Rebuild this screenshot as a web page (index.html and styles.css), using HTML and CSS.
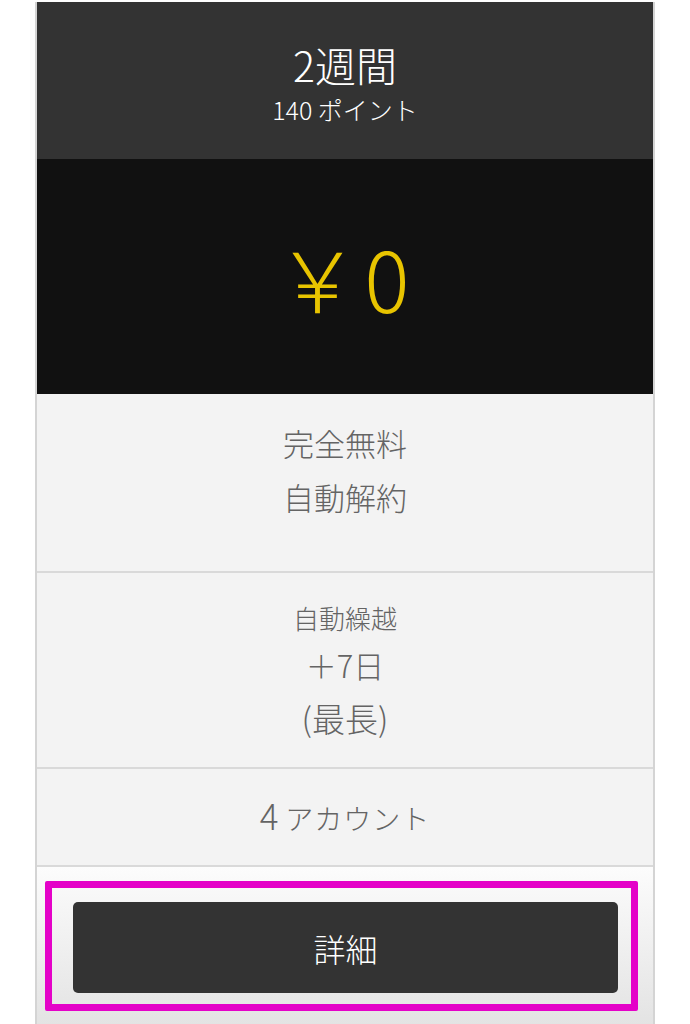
FILE: index.html
```html
<!DOCTYPE html>
<html lang="ja">
<head>
    <meta charset="UTF-8">
    <meta name="viewport" content="width=device-width, initial-scale=1.0">
    <title>2週間プラン</title>
    <link rel="stylesheet" href="styles.css">
</head>
<body>
<div class="plan-card">
    <div class="plan-header">
        <h2 class="plan-title">2週間</h2>
        <p class="plan-points">140 ポイント</p>
    </div>

    <div class="plan-price">￥0</div>

    <div class="plan-row row-free">
        <p>完全無料</p>
        <p>自動解約</p>
    </div>

    <div class="plan-row row-carry">
        <p class="carry-label">自動繰越</p>
        <p class="carry-days">＋7日</p>
        <p class="carry-note">(最長)</p>
    </div>

    <div class="plan-row row-accounts">
        <p><span class="account-num">4</span>アカウント</p>
    </div>

    <div class="plan-footer">
        <div class="highlight-box">
            <button type="button" class="detail-btn">詳細</button>
        </div>
    </div>
</div>
</body>
</html>
```

FILE: styles.css
```css
* {
    margin: 0;
    padding: 0;
    box-sizing: border-box;
}

body {
    background: #ffffff;
    font-family: 'Noto Sans CJK JP', 'Noto Sans', sans-serif;
    font-weight: 300;
    padding: 2px 35px 0;
}

/* カード本体 */
.plan-card {
    width: 620px;
    border-left: 2px solid #d4d4d4;
    border-right: 2px solid #d4d4d4;
    text-align: center;
}

/* ヘッダー */
.plan-header {
    background: #333333;
    color: #ffffff;
    padding: 38px 0 29px;
}

.plan-title {
    font-size: 41px;
    font-weight: 300;
    line-height: 48px;
}

.plan-points {
    font-size: 25px;
    line-height: 42px;
}

/* 価格 */
.plan-price {
    background: #111111;
    color: #e8c400;
    font-size: 84px;
    line-height: 100px;
    padding: 68px 0 67px;
    letter-spacing: 5px;
}

/* 各行 */
.plan-row {
    background: #f3f3f3;
    color: #646464;
    border-bottom: 2px solid #d9d9d9;
}

.row-free {
    font-size: 31px;
    line-height: 54px;
    padding: 22px 0 47px;
}

.row-carry {
    padding: 22px 0 20px;
}

.carry-label {
    font-size: 26px;
    line-height: 46px;
}

.carry-days {
    font-size: 31px;
    line-height: 48px;
}

.carry-note {
    font-size: 33px;
    line-height: 58px;
}

.row-accounts {
    font-size: 28px;
    line-height: 50px;
    height: 98px;
    padding: 24px 0 0;
    letter-spacing: 1px;
}

.account-num {
    font-size: 35px;
    line-height: 1;
    margin-right: 6px;
}

/* 詳細ボタン */
.plan-footer {
    background: linear-gradient(#fcfcfc, #e2e2e2);
    padding: 14px 15px 20px 8px;
}

.highlight-box {
    border: 7px solid #e402c8;
    border-radius: 2px;
    padding: 14px 13px 11px 21px;
}

.detail-btn {
    display: block;
    width: 100%;
    height: 91px;
    background: #333333;
    color: #ffffff;
    border: none;
    border-radius: 5px;
    font-family: inherit;
    font-weight: 300;
    font-size: 32px;
    cursor: pointer;
}
```
